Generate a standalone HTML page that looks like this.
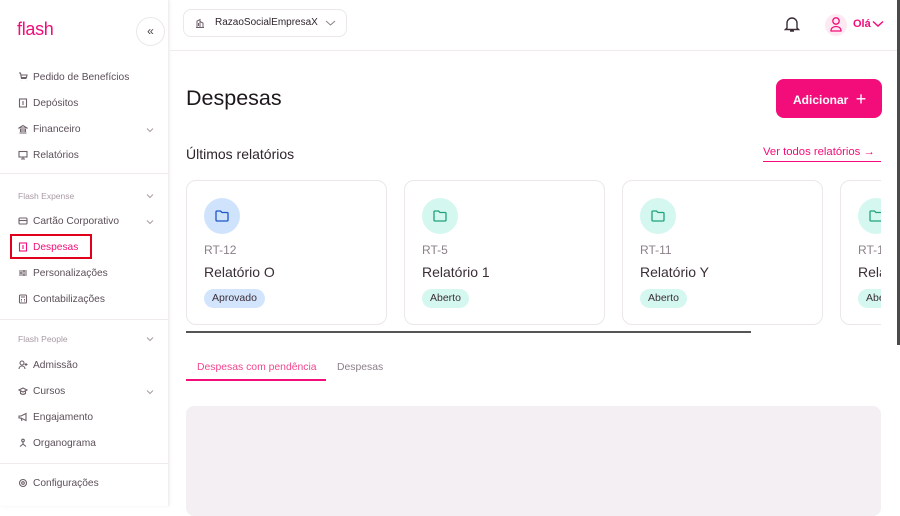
<!DOCTYPE html>
<html><head><meta charset="utf-8">
<style>
*{margin:0;padding:0;box-sizing:border-box}
body{width:900px;height:506px;overflow:hidden;background:#fff;font-family:"Liberation Sans",sans-serif;color:#3b2e37;position:relative}
.abs{position:absolute;white-space:nowrap}
.side{left:0;top:0;width:169px;height:506px;background:#fff;box-shadow:1px 0 3px rgba(0,0,0,.06);border-right:1px solid #f0eef0}
.item{position:absolute;left:18px;font-size:10.2px;color:#5b4f58;display:flex;align-items:center;gap:5px;height:14px;white-space:nowrap}
.item svg{width:10px;height:10px;stroke:#6d6069;fill:none;stroke-width:1.1}
.chev{position:absolute;left:146px;width:8px;height:8px}
.sec{position:absolute;left:18px;font-size:8.5px;color:#a79aa3}
.hr{position:absolute;left:0;width:169px;height:1px;background:#efeaee}
.card{position:absolute;top:180px;width:201px;height:145px;border:1px solid #ebe7ea;border-radius:10px;background:#fff}
.circ{position:absolute;left:17px;top:17px;width:36px;height:36px;border-radius:50%}
.rt{position:absolute;left:17px;top:62px;font-size:12px;color:#8c8089}
.nm{position:absolute;left:17px;top:83px;font-size:14px;color:#3b2e37;white-space:nowrap}
.tag{position:absolute;left:17px;top:108px;height:19px;border-radius:10px;font-size:10.5px;padding:0 8px;line-height:19px;color:#3b2e37}
</style></head><body>
<div class="abs side">
  <div class="abs" style="left:17px;top:19px;font-size:18px;color:#f20d7a;letter-spacing:-0.3px">flash</div>
  <div class="abs" style="left:136px;top:17px;width:29px;height:29px;border-radius:50%;border:1px solid #ece8eb;font-size:12px;text-align:center;line-height:26px;color:#4a3f47">«</div>
  <div class="item" style="top:70px"><svg viewBox="0 0 10 10"><path d="M1 1h1.5l1 5.5h5M3 3h6l-.5 2.5H3.5M3.5 8.5h.1M8 8.5h.1"/></svg>Pedido de Benefícios</div>
  <div class="item" style="top:96px"><svg viewBox="0 0 10 10"><rect x="1.5" y="1" width="7" height="8"/><path d="M5 3v4"/></svg>Depósitos</div>
  <div class="item" style="top:122px"><svg viewBox="0 0 10 10"><path d="M1 4l4-2.5L9 4zM1.5 9h7M2.5 5v3M4 5v3M6 5v3M7.5 5v3"/></svg>Financeiro</div>
  <svg class="chev" style="top:126px" viewBox="0 0 8 8"><path d="M1 2.5l3 3 3-3" stroke="#a89ca5" fill="none"/></svg>
  <div class="item" style="top:148px"><svg viewBox="0 0 10 10"><rect x="1" y="1.5" width="8" height="5.5"/><path d="M5 7v2M3 9h4"/></svg>Relatórios</div>
  <div class="hr" style="top:173px"></div>
  <div class="sec" style="top:191px">Flash Expense</div>
  <svg class="chev" style="top:192px" viewBox="0 0 8 8"><path d="M1 2.5l3 3 3-3" stroke="#a89ca5" fill="none"/></svg>
  <div class="item" style="top:214px"><svg viewBox="0 0 10 10"><rect x="1" y="2" width="8" height="6" rx="1"/><path d="M1 4.5h8"/></svg>Cartão Corporativo</div>
  <svg class="chev" style="top:218px" viewBox="0 0 8 8"><path d="M1 2.5l3 3 3-3" stroke="#a89ca5" fill="none"/></svg>
  <div class="abs" style="left:10px;top:234px;width:82px;height:25px;border:2px solid #e0001b"></div>
  <div class="item" style="top:240px;color:#f20d7a"><svg viewBox="0 0 10 10" style="stroke:#f20d7a"><rect x="1.5" y="1" width="7" height="8"/><path d="M5 3v4"/></svg>Despesas</div>
  <div class="item" style="top:266px"><svg viewBox="0 0 10 10"><path d="M1 3h8M1 5h8M1 7h8M6 2v2M3 4v2M6 6v2"/></svg>Personalizações</div>
  <div class="item" style="top:292px"><svg viewBox="0 0 10 10"><rect x="1.5" y="1" width="7" height="8" rx="1"/><path d="M3 3h4M3 5.5h1M6 5.5h1M3 7h1M6 7h1"/></svg>Contabilizações</div>
  <div class="hr" style="top:319px"></div>
  <div class="sec" style="top:334px">Flash People</div>
  <svg class="chev" style="top:335px" viewBox="0 0 8 8"><path d="M1 2.5l3 3 3-3" stroke="#a89ca5" fill="none"/></svg>
  <div class="item" style="top:358px"><svg viewBox="0 0 10 10"><circle cx="4" cy="3" r="2"/><path d="M1 9c0-2 1.5-3 3-3s3 1 3 3M8 3v3M6.5 4.5h3"/></svg>Admissão</div>
  <div class="item" style="top:384px"><svg viewBox="0 0 10 10"><path d="M1 4l4-2 4 2-4 2zM2.5 5v2.5c1.5 1 3.5 1 5 0V5"/></svg>Cursos</div>
  <svg class="chev" style="top:388px" viewBox="0 0 8 8"><path d="M1 2.5l3 3 3-3" stroke="#a89ca5" fill="none"/></svg>
  <div class="item" style="top:410px"><svg viewBox="0 0 10 10"><path d="M1 4h2l5-2.5v7L3 6H1zM3 6l1 3"/></svg>Engajamento</div>
  <div class="item" style="top:436px"><svg viewBox="0 0 10 10"><circle cx="5" cy="2.5" r="1.3"/><path d="M5 4v2M5 6L2 8.5M5 6l3 2.5"/></svg>Organograma</div>
  <div class="hr" style="top:463px"></div>
  <div class="item" style="top:476px"><svg viewBox="0 0 10 10"><circle cx="5" cy="5" r="3.5"/><circle cx="5" cy="5" r="1.3"/></svg>Configurações</div>
</div>

<div class="abs" style="left:170px;top:50px;width:730px;height:1px;background:#efeaee"></div>
<div class="abs" style="left:183px;top:9px;width:164px;height:28px;border:1px solid #ebe7ea;border-radius:8px">
  <svg class="abs" style="left:11px;top:8px" width="10" height="10" viewBox="0 0 10 10"><path d="M1 9.5h8M2 9.5V3l3-1.5v8M5 3.5l3 1.5v4.5M3.5 5v3" stroke="#6d6069" fill="none" stroke-width="1"/></svg>
  <div class="abs" style="left:31px;top:7px;font-size:10px;color:#2f252c">RazaoSocialEmpresaX</div>
  <svg class="abs" style="left:141px;top:9px" width="11" height="8" viewBox="0 0 11 8"><path d="M1 2l4.5 4L10 2" stroke="#8b8088" fill="none"/></svg>
</div>
<svg class="abs" style="left:784px;top:16px" width="16" height="17" viewBox="0 0 16 17"><path d="M3 12V7a5 5 0 0110 0v5l1.5 1.5h-13zM6 15h4" stroke="#3b2e37" fill="none" stroke-width="1.4"/></svg>
<div class="abs" style="left:825px;top:14px;width:22px;height:22px;border-radius:50%;background:#fde9f2"></div>
<svg class="abs" style="left:829px;top:16px" width="14" height="17" viewBox="0 0 14 17"><circle cx="7" cy="5" r="3.2" stroke="#f20d7a" fill="none" stroke-width="1.3"/><path d="M2 15c0-3 2.3-4.5 5-4.5s5 1.5 5 4.5z" stroke="#f20d7a" fill="none" stroke-width="1.3"/></svg>
<div class="abs" style="left:853px;top:18px;font-size:11px;color:#f20d7a;font-weight:bold">Olá</div>
<svg class="abs" style="left:872px;top:20px" width="12" height="8" viewBox="0 0 12 8"><path d="M1 1.5l5 4.5 5-4.5" stroke="#f20d7a" fill="none" stroke-width="1.5"/></svg>

<div class="abs" style="left:186px;top:86px;font-size:21.5px;color:#1d161b">Despesas</div>
<div class="abs" style="left:776px;top:79px;width:106px;height:39px;border-radius:8px;background:#f20d7a;color:#fff;font-size:12px;font-weight:bold;line-height:39px;padding-left:17px">Adicionar <span style="font-size:18px;font-weight:normal;position:relative;top:1px;margin-left:4px">+</span></div>
<div class="abs" style="left:186px;top:146px;font-size:14px;color:#2f252c">Últimos relatórios</div>
<div class="abs" style="left:763px;top:146px;font-size:11.3px;color:#f20d7a;border-bottom:1.5px solid #f20d7a;padding-bottom:3px;width:118px">Ver todos relatórios →</div>

<div class="abs" style="left:186px;top:180px;width:695px;height:146px;overflow:hidden">
  <div class="card" style="left:0;top:0">
    <div class="circ" style="background:#cfe3fd"></div>
    <svg class="abs" style="left:28px;top:29px" width="14" height="12" viewBox="0 0 14 12"><path d="M1 2a1 1 0 011-1h3.5l1.5 1.5h5a1 1 0 011 1V10a1 1 0 01-1 1H2a1 1 0 01-1-1z" stroke="#1e55c8" fill="none" stroke-width="1.3"/></svg>
    <div class="rt">RT-12</div><div class="nm">Relatório O</div>
    <div class="tag" style="background:#d2e5fd">Aprovado</div>
  </div>
  <div class="card" style="left:218px;top:0">
    <div class="circ" style="background:#d4f7ef"></div>
    <svg class="abs" style="left:28px;top:29px" width="14" height="12" viewBox="0 0 14 12"><path d="M1 2a1 1 0 011-1h3.5l1.5 1.5h5a1 1 0 011 1V10a1 1 0 01-1 1H2a1 1 0 01-1-1z" stroke="#20a37a" fill="none" stroke-width="1.3"/></svg>
    <div class="rt">RT-5</div><div class="nm">Relatório 1</div>
    <div class="tag" style="background:#d4f7ef">Aberto</div>
  </div>
  <div class="card" style="left:436px;top:0">
    <div class="circ" style="background:#d4f7ef"></div>
    <svg class="abs" style="left:28px;top:29px" width="14" height="12" viewBox="0 0 14 12"><path d="M1 2a1 1 0 011-1h3.5l1.5 1.5h5a1 1 0 011 1V10a1 1 0 01-1 1H2a1 1 0 01-1-1z" stroke="#20a37a" fill="none" stroke-width="1.3"/></svg>
    <div class="rt">RT-11</div><div class="nm">Relatório Y</div>
    <div class="tag" style="background:#d4f7ef">Aberto</div>
  </div>
  <div class="card" style="left:654px;top:0">
    <div class="circ" style="background:#d4f7ef"></div>
    <svg class="abs" style="left:28px;top:29px" width="14" height="12" viewBox="0 0 14 12"><path d="M1 2a1 1 0 011-1h3.5l1.5 1.5h5a1 1 0 011 1V10a1 1 0 01-1 1H2a1 1 0 01-1-1z" stroke="#20a37a" fill="none" stroke-width="1.3"/></svg>
    <div class="rt">RT-11</div><div class="nm">Relatório</div>
    <div class="tag" style="background:#d4f7ef">Aberto</div>
  </div>
</div>
<div class="abs" style="left:186px;top:331px;width:565px;height:2px;background:#555"></div>

<div class="abs" style="left:197px;top:362px;font-size:10.4px;color:#f2468f">Despesas com pendência</div>
<div class="abs" style="left:337px;top:362px;font-size:10.4px;color:#8c8089">Despesas</div>
<div class="abs" style="left:186px;top:379px;width:140px;height:2px;background:#f20d7a"></div>

<div class="abs" style="left:186px;top:406px;width:695px;height:110px;border-radius:8px;background:#f4eff3"></div>
<div class="abs" style="left:897px;top:0;width:3px;height:345px;background:#4a4a4a"></div>
</body></html>
